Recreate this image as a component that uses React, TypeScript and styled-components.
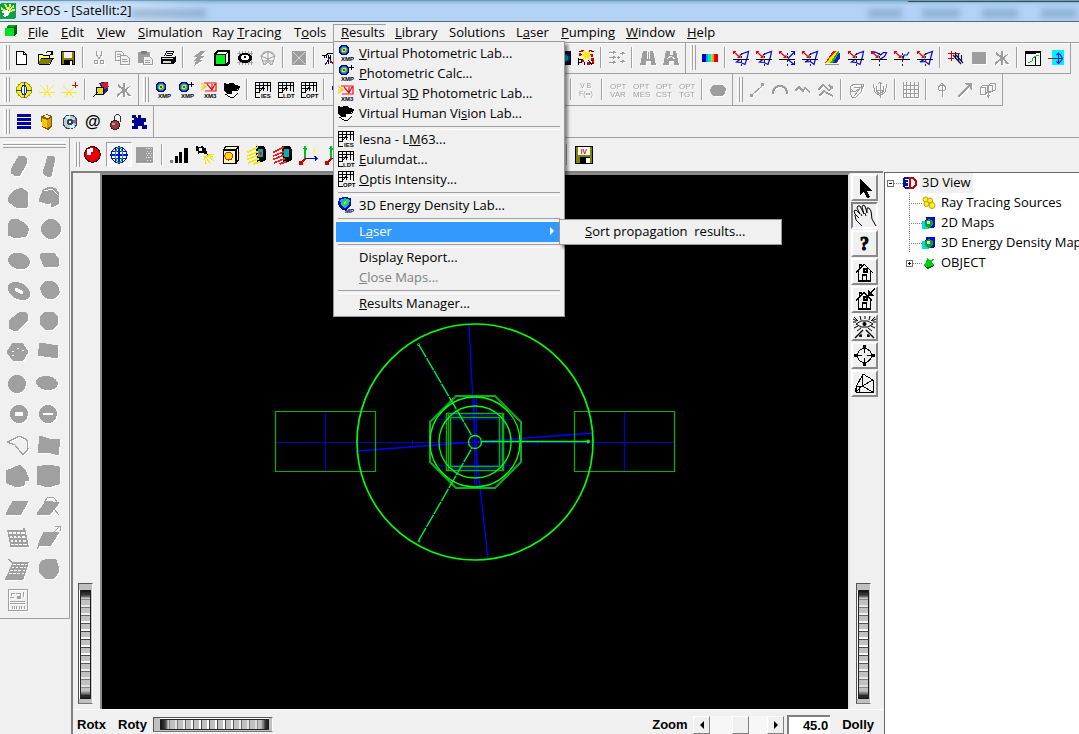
import React, { ReactNode } from "react";
import styled, { createGlobalStyle, css } from "styled-components";

const UI = '"Open Sans", "Noto Sans", sans-serif';

const GlobalStyle = createGlobalStyle`
  * { box-sizing: border-box; }
  body { margin: 0; background: #f0f0f0; color: #000; font: 13px/20px ${UI}; overflow: hidden; }
  button { font: inherit; color: inherit; border: 0; padding: 0; margin: 0; background: none; white-space: nowrap; }
  ul { list-style: none; margin: 0; padding: 0; }
  svg { display: block; flex: none; overflow: visible; }
`;

/* ---------- window chrome ---------- */

const Window = styled.div`
  height: 100vh;
  display: flex;
  flex-direction: column;
`;

const TitleBar = styled.header`
  height: 22px;
  flex: none;
  display: flex;
  align-items: center;
  gap: 5px;
  position: relative;
  overflow: hidden;
  border-top: 1px solid #6f9dbd;
  border-bottom: 1px solid #56697c;
  background: linear-gradient(90deg, rgba(255, 255, 255, 0.5), rgba(255, 255, 255, 0.35) 130px, transparent 210px),
    linear-gradient(#86b2d6, #b2d3f6 4px, #b2d3f6);
`;

const Title = styled.h1`
  margin: 0;
  font: 13px/18px ${UI};
  padding-bottom: 2px;
`;

const Reflection = styled.span<{ $left: number; $width: number }>`
  position: absolute;
  top: 8px;
  left: ${(p) => p.$left}px;
  width: ${(p) => p.$width}px;
  height: 9px;
  background: rgba(50, 85, 125, 0.28);
  filter: blur(3px);
`;

const BackWindow = styled.span`
  position: absolute;
  top: -3px;
  right: -4px;
  width: 176px;
  height: 4px;
  border-radius: 4px;
  background: #e6f1f6;
  border: 1px solid #40484c;
`;

const MenuBar = styled.nav`
  height: 20px;
  flex: none;
  display: flex;
  padding-left: 3px;
`;

const MenuLogo = styled.span`
  width: 17px;
  padding-top: 1px;
`;

const MenuSlot = styled.div<{ $width: number }>`
  position: relative;
  width: ${(p) => p.$width}px;
`;

const MenuTop = styled.button<{ $open?: boolean }>`
  width: 100%;
  height: 20px;
  text-align: left;
  padding: 0 0 4px 8px;
  line-height: 16px;
  ${(p) => p.$open && css`
    padding: 0 0 4px 7px;
    border-left: 1px solid #a0a0a0;
    border-right: 1px solid #fff;
    box-shadow: inset 0 1px #a0a0a0;
  `}
`;

const Popup = styled.ul<{ $left: string; $top: number; $width: number }>`
  position: absolute;
  z-index: 5;
  left: ${(p) => p.$left};
  top: ${(p) => p.$top}px;
  width: ${(p) => p.$width}px;
  padding: 2px;
  background: #f0f0f0;
  border: 1px solid #979797;
  box-shadow: 3px 3px 3px rgba(0, 0, 0, 0.45);
`;

const MenuItem = styled.li`
  position: relative;
`;

const MenuAction = styled.button<{ $selected?: boolean }>`
  display: flex;
  align-items: center;
  width: 100%;
  height: 20px;
  padding: 0 0 2px 2px;
  line-height: 18px;
  background: ${(p) => (p.$selected ? "#3399ff" : "transparent")};
  color: ${(p) => (p.$selected ? "#fff" : "#000")};
  white-space: pre;
  &:disabled { color: #808080; }
`;

const IconSlot = styled.span`
  width: 21px;
  flex: none;
`;

const SubArrow = styled.span`
  margin-left: auto;
  margin-right: 8px;
  border-left: 4px solid #fff;
  border-top: 4px solid transparent;
  border-bottom: 4px solid transparent;
`;

const MenuRule = styled.li`
  height: 6px;
  padding: 2px 2px 0;
  &::before { content: ""; display: block; height: 2px; border-top: 1px solid #a0a0a0; border-bottom: 1px solid #fff; }
`;

/* ---------- tool bars ---------- */

const ToolRows = styled.div`
  flex: none;
  overflow: hidden;
  box-shadow: inset 0 1px #a0a0a0, inset 0 2px #fff, inset 0 -1px #a0a0a0;
`;

const ToolRow = styled.div`
  display: flex;
  height: 32px;
`;

const Bar = styled.div<{ $big?: boolean }>`
  flex: none;
  display: flex;
  align-items: center;
  height: ${(p) => (p.$big ? 33 : 32)}px;
  padding: 0 3px 0 ${(p) => (p.$big ? 3 : 4)}px;
  border-right: ${(p) => (p.$big ? 0 : 1)}px solid #a0a0a0;
  border-bottom: ${(p) => (p.$big ? 0 : 1)}px solid #a0a0a0;
  --cell: ${(p) => (p.$big ? 26 : 23)}px;
`;

const Grip = styled.span<{ $tight?: boolean }>`
  width: 6px;
  height: 25px;
  margin-right: ${(p) => (p.$tight ? 0 : 2)}px;
  border-right: 1px solid #a0a0a0;
  background: linear-gradient(90deg, #fff 1px, #f0f0f0 1px 2px, #a0a0a0 2px 3px, #fff 3px 4px, #f0f0f0 4px);
`;

const Sep = styled.span`
  width: 2px;
  height: 21px;
  margin: 0 3px;
  border-left: 1px solid #a0a0a0;
  border-right: 1px solid #fff;
`;

const Gap = styled.span<{ $width: number }>`
  width: ${(p) => p.$width}px;
`;

const ToolButton = styled.button<{ $pressed?: boolean }>`
  width: var(--cell);
  height: 25px;
  display: flex;
  align-items: center;
  justify-content: center;
  &:disabled svg { filter: drop-shadow(1px 1px 0 #fff); }
  ${(p) => p.$pressed && css`
    background: #f8f8f8;
    border: 1px solid;
    border-color: #a0a0a0 #fff #fff #a0a0a0;
  `}
`;

/* ---------- body ---------- */

const Body = styled.div`
  flex: 1;
  min-height: 0;
  display: flex;
`;

const Palette = styled.aside`
  flex: none;
  align-self: flex-start;
  width: 70px;
  padding: 4px 3px 2px;
  border-right: 1px solid #a0a0a0;
  border-bottom: 1px solid #a0a0a0;
`;

const PaletteGrip = styled.div`
  height: 6px;
  margin-bottom: 3px;
  border-bottom: 1px solid #a0a0a0;
  background: linear-gradient(#fff 1px, #f0f0f0 1px 2px, #a0a0a0 2px 3px, #fff 3px 4px, #f0f0f0 4px);
`;

const PaletteGrid = styled.div`
  display: grid;
  grid-template-columns: 31px 31px;
  grid-auto-rows: 31px;
  color: #a0a0a0;
  svg { filter: drop-shadow(1px 1px 0 #fff); }
`;

const Work = styled.div`
  flex: 1;
  min-width: 0;
  display: flex;
  flex-direction: column;
  margin-left: 1px;
`;

const Panes = styled.div`
  flex: 1;
  min-height: 0;
  display: flex;
  gap: 1px;
`;

const Viewer = styled.main`
  flex: 1;
  min-width: 0;
  display: grid;
  grid-template-columns: 27px minmax(0, 1fr) 33px;
  grid-template-rows: minmax(0, 1fr) 25px;
  border-left: 2px solid #808080;
  border-top: 2px solid #808080;
`;

const WheelSide = styled.div`
  flex: 1;
  display: flex;
  flex-direction: column;
  justify-content: flex-end;
  align-items: flex-start;
  padding: 0 0 5px 5px;
`;

const Canvas = styled.div`
  min-height: 0;
  background: #000;
  border: solid #8c8c8c;
  border-width: 2px 2px 0 2px;
  border-right-color: #e3e3e3;
  svg { width: 100%; height: 100%; }
`;

const ViewTools = styled.div`
  display: flex;
  flex-direction: column;
  align-items: flex-start;
  gap: 1px;
  padding: 1px 0 0 1px;
  overflow: hidden;
`;

const ViewButton = styled.button<{ $pressed?: boolean }>`
  width: 27px;
  height: 27px;
  flex: none;
  display: flex;
  align-items: center;
  justify-content: center;
  border: 2px solid;
  border-color: ${(p) => (p.$pressed ? "#808080 #fff #fff #808080" : "#fff #8a8a8a #8a8a8a #fff")};
`;

const WheelInput = styled.input<{ $vertical?: boolean }>`
  appearance: none;
  display: block;
  margin: 0;
  border: 1px solid;
  border-color: #555 #fff #777 #555;
  outline: 0;
  ${(p) => p.$vertical
    ? css`
        writing-mode: vertical-lr;
        width: 15px;
        height: 121px;
        background:
          linear-gradient(90deg, #fff 1px, #222 1px 2px, transparent 2px 11px, #222 11px 12px, #c0c0c0 12px) 0 6px / 100% 109px no-repeat,
          linear-gradient(rgba(0,0,0,.9), rgba(0,0,0,.7) 5px, transparent 9px, transparent 101px, rgba(0,0,0,.7) 105px, rgba(0,0,0,.9)) 0 6px / 100% 109px no-repeat,
          linear-gradient(#c0c0c0, #c0c0c0) 0 0 / 100% 6px no-repeat,
          linear-gradient(#c0c0c0, #c0c0c0) 0 100% / 100% 4px no-repeat,
          linear-gradient(rgba(192,192,192,.8), transparent 45px, transparent 70px, rgba(192,192,192,.8)) 0 0 / 100% 100% no-repeat,
          repeating-linear-gradient(#c0c0c0 0 5px, #fff 5px 7px, #484848 7px 8px);
      `
    : css`
        width: 120px;
        height: 15px;
        background:
          linear-gradient(#fff 1px, #222 1px 2px, transparent 2px 11px, #222 11px 12px, #c0c0c0 12px) 6px 0 / 109px 100% no-repeat,
          linear-gradient(90deg, rgba(0,0,0,.9), rgba(0,0,0,.7) 5px, transparent 9px, transparent 101px, rgba(0,0,0,.7) 105px, rgba(0,0,0,.9)) 6px 0 / 109px 100% no-repeat,
          linear-gradient(#c0c0c0, #c0c0c0) 0 0 / 6px 100% no-repeat,
          linear-gradient(#c0c0c0, #c0c0c0) 100% 0 / 4px 100% no-repeat,
          linear-gradient(90deg, rgba(192,192,192,.8), transparent 45px, transparent 70px, rgba(192,192,192,.8)) 0 0 / 100% 100% no-repeat,
          repeating-linear-gradient(90deg, #c0c0c0 0 5px, #fff 5px 7px, #484848 7px 8px);
      `}
  &::-webkit-slider-thumb { appearance: none; width: 1px; height: 1px; background: transparent; }
`;

const Bottom = styled.div`
  grid-column: 1 / -1;
  display: flex;
  align-items: center;
  padding: 5px 9px 0 4px;
  border-top: 1px solid #fff;
  font: bold 13px/20px "Liberation Sans", sans-serif;
`;

const WheelLabel = styled.label<{ $width: number }>`
  width: ${(p) => p.$width}px;
`;

const ZoomGroup = styled.div`
  display: flex;
  align-items: center;
  margin-left: auto;
`;

const ArrowButton = styled.button<{ $right?: boolean }>`
  width: 17px;
  height: 18px;
  border: 1px solid;
  border-color: #fff #808080 #808080 #fff;
  display: flex;
  align-items: center;
  justify-content: center;
  &::before {
    content: "";
    border: 4px solid transparent;
    border-width: 4px ${(p) => (p.$right ? "0 4px 4px" : "4px 4px 0")};
    border-${(p) => (p.$right ? "left" : "right")}-color: #000;
  }
`;

const ZoomRange = styled.input`
  appearance: none;
  width: 57px;
  height: 18px;
  margin: 0;
  background: #f7f7f7;
  &::-webkit-slider-thumb {
    appearance: none;
    width: 17px;
    height: 18px;
    background: #f0f0f0;
    border: 1px solid;
    border-color: #fff #808080 #808080 #fff;
  }
`;

const ZoomValue = styled.input`
  width: 43px;
  height: 20px;
  margin: 0 12px 0 3px;
  padding: 0 2px 0 0;
  border: solid;
  border-width: 2px 0 0 2px;
  border-color: #808080;
  background: #fff;
  text-align: right;
  font: inherit;
`;

const TreePane = styled.section`
  flex: none;
  width: 195px;
  margin-top: 1px;
  padding-left: 2px;
  overflow: hidden;
  background: #fff;
  border-left: 1px solid #696969;
  border-top: 1px solid #696969;
`;

const TreeRow = styled.li<{ $depth: number }>`
  display: flex;
  align-items: center;
  height: 20px;
  padding-left: ${(p) => p.$depth * 19}px;
  white-space: nowrap;
`;

const Expander = styled.button<{ $plus?: boolean }>`
  width: 7px;
  height: 7px;
  flex: none;
  border: 1px solid #707070;
  background:
    linear-gradient(#000, #000) center / 3px 1px no-repeat,
    linear-gradient(#000, #000) center / ${(p) => (p.$plus ? "1px 3px" : "0 0")} no-repeat,
    #fff;
`;

const Branch = styled.span<{ $joint?: boolean }>`
  width: ${(p) => (p.$joint ? 13 : 9)}px;
  height: 20px;
  flex: none;
  margin-left: ${(p) => (p.$joint ? 3 : 0)}px;
  background:
    repeating-linear-gradient(90deg, #808080 0 1px, transparent 1px 2px) 0 10px / 100% 1px no-repeat,
    repeating-linear-gradient(#808080 0 1px, transparent 1px 2px) 0 0 / ${(p) => (p.$joint ? "1px 100%" : "0 0")} no-repeat;
`;

const TreeText = styled.span<{ $active?: boolean }>`
  margin-left: 3px;
  padding: 0 2px 2px;
  line-height: 18px;
  background: ${(p) => (p.$active ? "#f0f0f0" : "transparent")};
`;

/* ---------- icons ---------- */

const Svg = ({ s = 16, scale = 1, children }: { s?: number; scale?: number; children: ReactNode }) => (
  <svg width={s * scale} height={s * scale} viewBox={`0 0 ${s} ${s}`} shapeRendering="crispEdges" aria-hidden="true">{children}</svg>
);
const L = ({ d, c = "#000", w = 1, f = "none" }: { d: string; c?: string; w?: number; f?: string }) => (
  <path d={d} stroke={c} strokeWidth={w} fill={f} />
);
const F = ({ d, c = "#000" }: { d: string; c?: string }) => <path d={d} fill={c} />;
const Tiny = ({ x, y, t, c = "#000", s = 6 }: { x: number; y: number; t: string; c?: string; s?: number }) => (
  <text x={x} y={y} fill={c} fontSize={s} fontWeight={s < 7 ? 700 : 400} fontFamily="Liberation Sans, sans-serif" shapeRendering="auto">{t}</text>
);
const G = "#9d9d9d";

const xmpTarget = (
  <>
    <circle cx="6" cy="5" r="5.500" fill="#0000a8" />
    <circle cx="6" cy="5" r="4" fill="#0060ff" />
    <circle cx="6" cy="5" r="3" fill="#00e040" />
    <circle cx="6" cy="5" r="2" fill="#ffe000" />
    <F d="M5 4h2v2H5z" c="#f00000" />
  </>
);
const chart = <L d="M.5 9.500V.5h15v9M0 3.500h16M0 6.500h10M4.500 1v10M8.500 1v8M.5 9v6.500H5M0 10.500h5M4 10.500L9.500 3.500M12.500 1v8" />;
const polar = (tail: string, extra?: ReactNode) => (
  <>
    <g shapeRendering="auto"><L d={tail} c="#0000e8" w={1.200} /></g>
    <L d="M0 9.500h16" />
    <L d="M8.500 3v2M8.500 6v2M8.500 9v3M8.500 14v2" c="#202020" />
    <g shapeRendering="auto"><L d="M.5 1.500l6.500 6M.5 4V1.500H3M7 5v2.500H4.500" c="#e80000" w={1.100} /></g>
    {extra}
  </>
);

const icons: Record<string, ReactNode> = {
  newDoc: <L d="M2.500 1.500h7l3 3v10h-10zM9.500 1.500v3h3" f="#fff" />,
  open: <><F d="M1 4h5l1 2h6v8H1z" c="#ffff70" /><F d="M4 8h12l-4 6H1z" c="#808000" /><L d="M1.500 14V4.500h4l1 1h6V8M4 8.500h12l-3 5.500H1.500M9 3l2-1.500h3l1 2M15.500 1v3h-3" /></>,
  save: <><F d="M1 1h14v14H1z" /><F d="M2 2h12v12H2z" c="#808000" /><F d="M4 2h8v6H4z" c="#f0f0f0" /><F d="M4 10h9v5H4z" /><F d="M10 11h2v4h-2z" c="#fff" /></>,
  saveIv: <><F d="M0 0h16v16H0z" /><F d="M1 1h14v14H1z" c="#808000" /><F d="M3 1h10v7H3z" c="#fff" /><F d="M4 10h9v6H4z" /><F d="M10 11h3v4h-3z" c="#fff" /><Tiny x={5} y={7} t="IV" c="#e00000" s={6} /></>,
  cut: <><L d="M5.500 1v4l3 4M10.500 1v4l-3 4" c={G} /><circle cx="5" cy="12" r="2" stroke={G} fill="none" /><circle cx="11" cy="12" r="2" stroke={G} fill="none" /></>,
  copy: <><L d="M1.500 1.500h6l2 2v7h-8zM3 4.500h4M3 6.500h4" c={G} /><L d="M6.500 5.500h6l3 3v6h-9zM8 9.500h5M8 11.500h6" c={G} f="#f0f0f0" /></>,
  paste: <><F d="M1 2h12v11H1z" c={G} /><F d="M4 1h6v3H4z" c="#808080" /><L d="M6.500 6.500h6l3 3v5h-9zM8 10.500h5M8 12.500h5" c={G} f="#f0f0f0" /></>,
  print: <><L d="M4.500 6.500l2-5h7l-2 5" f="#fff" /><F d="M1 7h13l2-2v6l-3 3H1z" /><F d="M2 8h11v1H2zM3 11h8v2H3z" c="#d8d8d8" /><L d="M7 3.500h5M6 5.500h5" /><F d="M8 11h3v1H8z" c="#e0e000" /></>,
  bolt: <F d="M10 1h4L9 6h5l-6 4h4l-9 6 2-5H2l4-4H2z" c={G} />,
  cube: <><F d="M0 3l3-3h13v13l-3 3H0z" /><F d="M2 5h9v9H2z" c="#00f020" /><F d="M4 2h9l-2 2H2z" c="#fff" /><F d="M12 5l2-3v9l-2 3z" c="#fff" /></>,
  eye: <><L d="M2.500 1v14M5.500 1v14M8.500 1v14M11.500 1v14M14.500 1v14M0 3.500h16M0 12.500h16" c="#a0a0a0" /><ellipse cx="8" cy="8" rx="7" ry="5" fill="#000" /><ellipse cx="8" cy="7.500" rx="4" ry="2.500" fill="#fff" /><circle cx="8" cy="7" r="1.500" /></>,
  mesh: <g shapeRendering="auto"><L d="M8 1L1 6l7 3 7-3zM1 6l3 9 4-6 4 6 3-9M1 6L4 2h8l3 4M8 1v8M2 11h12M5 15l3-3 3 3" c={G} /></g>,
  crossBox: <><F d="M1 1h14v14H1z" c={G} /><L d="M2 2l12 12M14 2L2 14" c="#d8d8d8" /></>,
  table: <><L d="M0 5.500h4l2-2h8v2h2M4 8v-2M8 5v7M6 5v9M11 5v9M2 5v3" w={1} /><L d="M8 7l-5 8" c="#0020c0" /><L d="M8 11l5 4" c="#c00000" w={2} /></>,
  disc3d: <><F d="M0 1h16v14H0z" /><circle cx="10" cy="8" r="5" fill="#0020c0" /><circle cx="10" cy="8" r="3" fill="#00c060" /></>,
  burst: <><L d="M.5 8v7M.5 9.500h3v3H.5M6.500 12v3M10 10l4 5M1 4.500h3M13 13.500h3M9 14.500h3M1 1.500h3M12 1.500h4" /><F d="M1 3h2v3H1zM12 4h3v3h-3zM13 8h3v3h-3zM9 12h3v3H9zM4 9h2v3H4zM3 0h3v2H3zM11 0h3v2h-3zM13 12l3-2v4z" c="#d00000" /><F d="M8 0l1 3 4-2-2 4 4 1-4 1 1 3-4-2-3 2 1-3-4-2 4-1-1-3 3 1z" c="#fff000" /></>,
  arrows: <L d="M0 2.500h6M4 1l2 1.500L4 4M0 7.500h6M4 6l2 1.500L4 9M0 12.500h6M4 11l2 1.500L4 14M8 7.500h3M9.500 6v3M11 3.500h4M13 2l2 1.500L13 5M11 11.500h4M13 10l2 1.500-2 1.500" c={G} />,
  road: <><F d="M3 1h4v8h3V1h3l3 14h-5v-4H6v4H0z" c={G} /><L d="M8.500 2v7" c={G} /></>,
  road2: <><F d="M3 1h4v4h3V1h3l3 14h-5v-4H6v4H0z" c={G} /><L d="M4 9l4-3 4 3" c="#f0f0f0" /></>,
  spectrum: <><F d="M0 4h4v8H0z" c="#0000c0" /><F d="M4 4h2v8H4z" c="#00a0ff" /><F d="M6 4h3v8H6z" c="#00e8d0" /><F d="M9 4h1v8H9z" c="#c0e000" /><F d="M10 4h2v8h-2z" c="#ffa000" /><F d="M12 4h4v8h-4z" c="#e00000" /></>,
  polA: polar("M7 5l4-2 4.500-1.500-1 5-2.500 8L8 12.500 3.500 12l4-3"),
  polB: polar("M7 5l4-2 4.500-1.500-1.500 5-2 8-3.500-3L3 12l5-3"),
  polC: polar("M9 8.500l6-6M9 9.500l6 5", <F d="M12 1h4v4h-1V2h-3zM15 11h1v4h-4v-1h3z" c="#0000e8" />),
  polD: polar("M1.500 4l2-2 3 1 3 2 3-2.500h3l-2 4-5 3"),
  polE: polar("M9 9l1-4h3l2-3"),
  rainbow: <><F d="M0 13L8 1h6v8l-2 4z" c="#f01010" /><F d="M1 13L7 5l4-4h2L6 13z" c="#ffe800" /><F d="M5 13L13 1h1v3L8 13z" c="#10b020" /><F d="M8 13l6-10 1 0v5l-4 5z" c="#1020d0" /><L d="M0 14.500h14" c="#909090" /></>,
  plane: <><L d="M0 3.500h12M0 8.500h6M3.500 1v10" c="#d00000" /><g shapeRendering="auto"><L d="M7.500 2v7M5 5l8 9M10.500 4v7M8 5l7 8M13.500 5v6" c="#101050" w={1.200} /></g></>,
  block: <F d="M1 2h14v12H1z" c={G} />,
  starX: <><L d="M8 1v14M8 7l6 7M8 8L1 14M2 3l6 5" c={G} w={2} /><L d="M14 4l-6 5" c={G} /></>,
  gauge: <><L d="M.5 1.500h15v14H.5zM0 3.500h11M10.500 6v9" f="#fff" /><F d="M0 1h16v2H0z" /><L d="M3 13l4-2 1-3 3-2 3-1" c="#00c020" /></>,
  cyan: <><F d="M4 0h12v15H4z" c="#00f0ff" /><L d="M0 8.500h8" c="#e00000" /><g shapeRendering="auto"><L d="M7 8.500h7M10.500 3v10M8.500 5l2-2 2 2 2 3.500-2 3-2 2-2-2" c="#0020d0" w={1.200} /></g></>,
  globeY: <><circle cx="8" cy="8" r="7.500" fill="#fff200" stroke="#a09800" /><ellipse cx="8" cy="8" rx="2.500" ry="5" stroke="#0020c0" fill="#fff" /><L d="M8.500 0v16M0 8.500h5M11 8.500h5" c="#2040c0" /></>,
  rays: <L d="M8 3v5M8 10L1 3M8 10l7-7M8 10H0M8 10h8M8 10l-4 5M8 10l4 5" c="#f4ec20" />,
  raysPlus: <><L d="M7 10L1 4M7 10l5-5M7 10H0M7 10h8M7 10l-4 5M7 10l4 5" c="#f4ec20" /><L d="M13.500 0v6M10 3.500h6" c="#e00000" /></>,
  tool: <><F d="M6 1l3-1h6v9l-4 3z" c="#1020a0" /><F d="M8 1l6-1 2 5-6 3z" c="#d02020" /><F d="M3 5h8v8H3z" c="#e8d820" /><L d="M3.500 5.500h7v7h-7zM0 15l5-5" /></>,
  xmp: <>{xmpTarget}<Tiny x={3} y={16} t="XMP" /></>,
  xmpPlus: <>{xmpTarget}<L d="M13.500 0v5M11 2.500h5" /><Tiny x={3} y={16} t="XMP" /></>,
  xm3: <><g shapeRendering="auto"><L d="M3 1h12v8H4M6 2l5 6M11 2v6M14 2l-3 6" c="#f01010" w={1.200} /><L d="M0 1l5 4-5 3M0 5h5" c="#ffc800" w={1.200} /></g><Tiny x={3} y={16} t="XM3" /></>,
  vision: <><F d="M0 1l3 1 3-1h3l2 2 5 1-1 5-2-3 1 4-4 2-5 1-3-2-2-3z" /><F d="M8 9h4l3 1-3 4-6 1-5-2 2-1 5 0z" c="#fff" /><L d="M1 12l5 3h4l4-4" /></>,
  ies: <>{chart}<Tiny x={6} y={16} t="IES" /></>,
  ldt: <>{chart}<Tiny x={5} y={16} t="LDT" /></>,
  opt: <>{chart}<Tiny x={5} y={16} t="OPT" /></>,
  energy: <><F d="M1 1l6-1 6 1v7l-5 6-5-2-3-5z" c="#0010a0" /><F d="M2 3l5-2 5 2-1 5-4 3-3-2z" c="#00b0ff" /><F d="M4 6l5-4 2 2-4 5H4z" c="#30e030" /><F d="M6 5l2-1v2L6 7z" c="#ffe000" /><Tiny x={7} y={16} t="MP" c="#000060" /></>,
  vb: <><Tiny x={1} y={6} t="V B" c={G} s={7} /><Tiny x={0} y={14} t="F(••)" c={G} s={7} /></>,
  hexBlob: <F d="M3 3h10l3 4-1 5-3 2H4l-3-2-1-4z" c={G} />,
  line: <><L d="M2 14L14 3" c={G} /><F d="M1 12h3v3H1zM12 1h3v3h-3z" c={G} /></>,
  arc: <L d="M1 12V9l2-3 3-2h4l3 2 2 3v3" c={G} w={2} />,
  wave: <L d="M0 9l4-4 4 4 2-3 5 4" c={G} w={1.500} />,
  wave2: <L d="M0 8l5-5 6 5 4-3M1 14l5-5 3 2 6 3M11 3l4 4" c={G} w={1.500} />,
  link: <L d="M1 5l4-3h10l-3 8-5 5H3l-2-4zM1 9l5 1 9-7M5 14L12 5H5M1 5l3 5M12 2v5" c={G} />,
  lens: <L d="M1 2l2 8 5 4 5-4 2-8M8 0v16M5 4L4 9l4 3 4-3-1-5M4 8h8M6 2l2-2 2 2" c={G} />,
  grid: <L d="M3.500 0v16M7.500 0v16M11.500 0v16M15 0v16M0 3.500h16M0 7.500h16M0 11.500h16M0 15h16M.5 0v16" c={G} />,
  pin: <L d="M8 1v14M5 8l-1-2 2-3h4l2 3-1 2zM6 3l2-2 2 2" c={G} />,
  arrow: <><L d="M1 15L13 3" c={G} w={2} /><F d="M7 1h8v8l-2-2V3H9z" c={G} /></>,
  boxes: <L d="M.5 5.500h5v7h-5zM.5 5.500l2-2h5v7l-2 2M8.500 3.500h4v6h-4zM8.500 3.500l2-2h5v6l-3 2M5 10.500h6M8.500 8v6M7 13l1.500 2 1.500-2" c={G} />,
  lines: <F d="M1 0h14v3H1zM1 4h14v3H1zM1 8h14v3H1zM1 12h14v3H1z" c="#0000a0" />,
  book: <><F d="M2 2l6-2 5 2v10l-4 4-6-3z" c="#7a5a00" /><F d="M4 2l4-1 4 2-4 1z" c="#fff0b0" /><F d="M3 4l5 2v8l-5-2z" c="#ffc800" /><F d="M8 6l4-2v8l-4 2z" c="#d89a00" /></>,
  disc: <><circle cx="8" cy="8" r="7" fill="#b8d0dc" stroke="#404040" /><F d="M8 8L3 3l5-2zM8 8l5 5-5 2z" c="#c8fbff" /><F d="M8 8l6-3v5z" c="#7070b0" /><circle cx="8" cy="8" r="3" fill="#404040" /><circle cx="8" cy="8" r="1.500" fill="#fff" /></>,
  at: <text x="0" y="13" fontSize="16" fontWeight="700" fontFamily="Liberation Sans, sans-serif">@</text>,
  lock: <><L d="M6.500 7V2.500l2-2h2l2 2V8" c="#303030" /><circle cx="7" cy="11" r="4.500" fill="#904040" stroke="#401010" /><F d="M4 9h3v2H4z" c="#d09090" /></>,
  puzzle: <F d="M1 1h4l1 3h1V1h3v3h5v4h-2v3h3v4h-5v-3H7v3H1v-3h2V9H1V6h2V4H1z" c="#000090" />,
  ball: <><circle cx="7.500" cy="7.500" r="7.500" fill="#400000" /><circle cx="7.500" cy="7.500" r="6.500" fill="#e80000" /><F d="M3 3h2V2h3v3H6v3H3z" c="#fff" /></>,
  globe: <><circle cx="8" cy="8" r="7" stroke="#0010d0" fill="#fff" /><L d="M1 5h14M0 8h16M1 11h14M8 0v16M5 1v14M11 1v14" c="#0010e0" /><ellipse cx="8" cy="8" rx="3" ry="7" stroke="#00b040" fill="none" /></>,
  shade: <><F d="M0 1h15v14H0z" c={G} /><path d="M9 2.500h5M10 4.500h4M9 6.500h5M10 8.500h4M9 10.500h5M10 12.500h4" stroke="#e0e0e0" strokeDasharray="1 1" /></>,
  bars: <><F d="M0 12h3v3H0z" c="#808080" /><F d="M4 9h3v6H4zM8 5h3v10H8zM12 2h4v13h-4z" /></>,
  lamp: <><F d="M0 0l3 1 3-1 2 2 1-1v3l2 4-6-2-3 1v-2L0 4z" /><F d="M3 2h2v2H3z" c="#fff" /><L d="M10 7l6 1M9 8l7 5M8 9l5 7M7 9l2 7M11 8l4 2" c="#f4e800" /></>,
  boxSun: <><L d="M4 5l11-4M12 8l4-2M12 11l4-1" c="#f4e800" /><L d="M1.500 3.500h11v12h-11zM1.500 3.500l2-3h11v12l-2 3M12.500 3.500l2-3" w={1.200} f="#fffbc8" /><circle cx="6" cy="9" r="3.500" fill="#ffe000" stroke="#f02020" /></>,
  camY: <><F d="M7 0h7l2 4v8l-3 2H8z" /><F d="M9 3h4v7H9z" c="#00b0b0" /><F d="M10 5h2v3h-2z" c="#f02020" /><L d="M-1 6l10-5M-1 9l10-4M-1 12l10-4M0 15l10-4M5 16l6-2" c="#f4e800" w={1.500} /></>,
  camR: <><F d="M7 0h7l2 4v8l-3 2H8z" /><F d="M9 3h4v7H9z" c="#00b0b0" /><L d="M-1 6l10-5M-1 9l10-4M-1 12l10-4M0 15l10-4M5 16l6-2" c="#f02020" w={1.500} /></>,
  axes: <><L d="M11 2l3 4M14 2l-3 4M12.500 1v6" c="#f8f080" /><L d="M4.500 0v11M3 3l1.500-2L6 3" c="#00c020" w={1.200} /><L d="M5 11h11M13 9l2 2-2 2" c="#0010b0" w={1.500} /><L d="M5 11l-5 5M0 13v3h3" c="#d00000" w={1.500} /></>,
};
["VAR", "MES", "CST", "TGT"].forEach((t) => {
  icons["opt" + t] = <><Tiny x={0} y={7} t="OPT" c={G} s={8} /><Tiny x={0} y={15} t={t} c={G} s={8} /></>;
});

const greyed = new Set("cut copy paste bolt mesh crossBox arrows road road2 block starX vb optVAR optMES optCST optTGT hexBlob line arc wave wave2 link lens grid pin arrow boxes shade".split(" "));

const Tools = ({ items, tight, big, pressed }: { items: string; tight?: boolean; big?: boolean; pressed?: string }) => (
  <Bar role="toolbar" $big={big}>
    <Grip $tight={tight} />
    {items.split(" ").map((n, i) => {
      if (n === "|") return <Sep key={i} />;
      if (n[0] === "~") return <Gap key={i} $width={Number(n.slice(1))} />;
      return (
        <ToolButton key={i} aria-label={n} disabled={greyed.has(n)} $pressed={n === pressed}>
          <Svg scale={big ? 1.125 : 1}>{icons[n]}</Svg>
        </ToolButton>
      );
    })}
  </Bar>
);

const P = ({ p }: { p: string }) => <polygon points={p} fill="currentColor" stroke="currentColor" strokeLinejoin="round" />;
const O = ({ d }: { d: string }) => <path d={d} fill="none" stroke="currentColor" />;
const E = ({ x, y, rx, ry = rx, r = 0 }: { x: number; y: number; rx: number; ry?: number; r?: number }) => (
  <ellipse cx={x} cy={y} rx={rx} ry={ry} transform={`rotate(${r} ${x} ${y})`} fill="currentColor" />
);

const shapes: [string, ReactNode][] = [
  ["Cylinder", <P p="16,5 20,5 24,8 23,13 17,24 13,25 8,22 9,17" />],
  ["Rod", <P p="14,5 18,5 21,7 17,25 13,25 9,22" />],
  ["Cone", <P p="5,16 11,9 18,6 24,10 24,25 13,25 6,20" />],
  ["Elbow", <><P p="5,19 9,8 15,5 22,7 25,12 24,22 18,25 17,20 14,22" /><path d="M10 9l8-2 6 6" stroke="#fff" fill="none" /></>],
  ["Pyramid", <P p="9,6 14,6 22,11 26,16 23,23 13,25 5,22 5,11" />],
  ["Sphere", <E x={17} y={16} rx={10} />],
  ["Ellipsoid", <E x={16} y={17} rx={11} ry={8} r={15} />],
  ["Box", <P p="8,9 20,9 25,16 24,22 10,22 6,12" />],
  ["Torus", <><E x={16} y={16} rx={12} ry={8} r={30} /><ellipse cx="16" cy="16" rx="5" ry="2" transform="rotate(30 16 16)" fill="#fff" /></>],
  ["Paraboloid", <E x={16} y={15} rx={10} ry={9} r={35} />],
  ["Tube", <P p="17,6 22,6 25,9 24,15 15,24 10,24 6,22 6,15" />],
  ["Ball", <P p="11,6 19,6 23,10 24,18 19,23 11,23 6,18 6,11" />],
  ["Hexagon", <><P p="4,15 10,6 19,6 25,15 20,23 10,23" /><path d="M9 14h2M14 11h2M19 13h2M9 18h2" stroke="#fff" /></>],
  ["Plate", <P p="6,6 24,9 23,21 4,18" />],
  ["Disc", <E x={14} y={16} rx={9} />],
  ["Ellipse", <E x={13} y={15} rx={11} ry={7} r={8} />],
  ["Ring", <><E x={16} y={15} rx={9} /><rect x="12" y="13" width="8" height="4" rx="1" fill="#fff" /></>],
  ["Slot", <><E x={14} y={15} rx={9} /><path d="M9 14h10v2H9z" fill="#fff" /></>],
  ["Face", <g strokeWidth="1.300"><O d="M4 12L17 6l7 4 1 9-5 6-8-10zM4 12l8 3" /></g>],
  ["Patch", <P p="6,6 15,9 26,10 24,25 14,22 4,22" />],
  ["Polygon", <P p="17,4 22,9 26,19 22,20 21,24 14,26 4,22 3,10" />],
  ["Shield", <P p="3,6 14,4 25,6 25,23 14,26 3,23" />],
  ["Plane", <P p="10,9 25,9 18,22 3,22" />],
  ["Revolve", <><P p="12,9 25,11 16,22 3,22" /><O d="M10 10l4-5 6 1 4 5M20 17l5 6M14 5l-2 2" /></>],
  ["Mesh", <g strokeWidth="1.300"><O d="M5 8h17l3 15H8zM5 12h18M6 16h18M7 20h18M9 8l3 15M13 8l3 15M17 8l3 15M21 5v4" /></g>],
  ["Extrude", <><P p="10,9 25,9 17,22 4,22" /><O d="M20 9l6-6M21 3h5v5M3 26l3-4" /></>],
  ["Array", <g strokeWidth="1.300"><O d="M10 9h15l-5 16H3zM5 5l5 4M9 12h15M7 15h16M6 18h16M4 21h17M14 9l-7 16M18 9l-7 16M22 9l-6 16M3 23h18" /></g>],
  ["Blob", <P p="8,7 14,5 22,6 24,12 24,19 20,24 11,24 6,19 5,12" />],
  ["Report", <g shapeRendering="crispEdges"><O d="M5.500 4.500h19v21h-19zM8.500 11V8.500h3M13 8.500h4v3M20.500 7v5M7 12.500h4M7 16.500h15M7 18.500h15M9.500 21v3M11.500 21v3M13.500 21v3M16.500 21v3M18.500 21v3M21.500 21v3" /><path d="M14 11h4v3h-4z" fill="currentColor" /></g>],
];

const viewTools: [string, ReactNode][] = [
  ["Select", <F d="M7 3v16l4-3 3 6 3-1-3-6h5z" />],
  ["Grab", <g shapeRendering="auto"><L d="M6 14L2 10l-1-3 2-1 4 4-3-6 1-2h2l4 8-2-7 1-2 2 1 2 7 0-5 2 0 2 3 1 8 4 7M2 11l1 5 6 6M8 10l1 2M12 9l1 3" /></g>],
  ["Help", <text x="7" y="18" fontSize="18" fontWeight="700" stroke="#000" fontFamily="Liberation Serif, serif">?</text>],
  ["Home", <L w={1.300} d="M3 13l8-9 9 9M5.500 11v10h12V11M6.500 8V5h2M9.500 21v-6h4v6M11 9h3v3h-3z" />],
  ["Set home", <><L w={1.300} d="M3 13l8-9 8 9M5.500 11v10h12V11M6.500 8V5h2M9.500 21v-6h4v6M11 9h3v3h-3z" /><F d="M15 8V2l2 2 4-4 1 1-4 4 3 3z" /></>],
  ["View all", <g shapeRendering="auto"><L d="M3 8l5-3h7l5 3-5 3H8zM1 1l4 4M7 0l1 4M12 0v3M17 0l-1 4M22 1l-4 4M0 6h3M20 6h3M1 12l4-2M18 10l4 2M4 15l4-3M19 15l-4-3M0 3l4 2M23 3l-4 2" /><circle cx="11.500" cy="8" r="2" fill="#000" /><L d="M2 22l8-8M21 22l-8-8M8 21v-3M15 21v-3M6 20h3M14 20h3" w={1.400} /></g>],
  ["Seek", <><circle cx="11.500" cy="11.500" r="7" stroke="#000" fill="none" /><L d="M11.500 1v8M11.500 14v8M1 11.500h8M14 11.500h8" /><F d="M10 1h3v4h-3zM10 18h3v4h-3zM1 10h4v3H1zM18 10h4v3h-4z" /></>],
  ["Perspective", <L d="M3 15L10 2l10 6v12L3 20zM3 15l6-1 11 6M10 2l-1 12L3 20M9 14l11-6M3 20l-1-4M6 20v-5" />],
];

/* ---------- menus ---------- */

const Mnemonic = ({ text }: { text: string }) => {
  const i = text.indexOf("&");
  if (i < 0) return <>{text}</>;
  return <span>{text.slice(0, i)}<u>{text[i + 1]}</u>{text.slice(i + 2)}</span>;
};

const topMenus: [string, number][] = [
  ["&File", 33], ["&Edit", 36], ["&View", 41], ["&Simulation", 74], ["Ray &Tracing", 82], ["T&ools", 47],
  ["&Results", 54], ["&Library", 54], ["Solutions", 67], ["L&aser", 45], ["&Pumping", 65], ["&Window", 61], ["&Help", 44],
];

const results: [string, string?][] = [
  ["&Virtual Photometric Lab...", "xmp"], ["&Photometric Calc...", "xmpPlus"],
  ["Virtual 3&D Photometric Lab...", "xm3"], ["Virtual Human Vi&sion Lab...", "vision"], ["-"],
  ["Iesna - L&M63...", "ies"], ["&Eulumdat...", "ldt"], ["&Optis Intensity...", "opt"], ["-"],
  ["3D Energy Density Lab...", "energy"], ["-"], ["L&aser"], ["-"],
  ["Displa&y Report..."], ["&Close Maps..."], ["-"], ["&Results Manager..."],
];

const ResultsMenu = () => (
  <Popup $left="0px" $top={19} $width={232}>
    {results.map(([label, icon], i) => {
      if (label === "-") return <MenuRule key={i} />;
      const sub = label === "L&aser";
      return (
        <MenuItem key={i}>
          <MenuAction $selected={sub} disabled={label === "&Close Maps..."}>
            <IconSlot>{icon && <Svg>{icons[icon]}</Svg>}</IconSlot>
            <Mnemonic text={label} />
            {sub && <SubArrow />}
          </MenuAction>
          {sub && (
            <Popup $left="calc(100% - 3px)" $top={-3} $width={223}>
              <MenuItem>
                <MenuAction><IconSlot /><Mnemonic text="&Sort propagation  results..." /></MenuAction>
              </MenuItem>
            </Popup>
          )}
        </MenuItem>
      );
    })}
  </Popup>
);

/* ---------- satellite wireframe ---------- */

const Satellite = () => (
  <svg viewBox="102 175 746 534" role="img" aria-label="Satellite wireframe" fill="none">
    <g stroke="#0000c8" strokeWidth="1.200">
      <path d="M275 442.500h400M325.500 412v60M624.500 412v60M435 419.500h78M435 465.500h78M412.500 440v5M537.500 440v5" />
      <path d="M448.500 415.500h53v53h-53zM474.500 396v92M476.500 396v92" />
    </g>
    <g stroke="#0000ff">
      <path d="M469 325l6 117 13 117M357 451l118-9 118-9" strokeWidth="1.300" />
      <path d="M418 345l55 96M418 540l55-96" strokeDasharray="6 3" />
    </g>
    <g stroke="#00b400" strokeWidth="1.200">
      <path d="M275.500 411.500h100v60h-100zM574.500 411.500h100v60h-100z" />
      <path d="M446.500 413.500h57v57h-57zM450.500 417.500h49v49h-49z" strokeWidth="1.500" />
      <path d="M448.500 414v56M502.500 414v56" />
    </g>
    <path d="M456 396h39l26 26v40l-26 26h-39l-26-26v-40z" stroke="#00b020" strokeWidth="2" />
    <g stroke="#00ff00">
      <circle cx="475" cy="442" r="118" strokeWidth="1.700" />
      <circle cx="475" cy="442" r="45" strokeWidth="1.300" />
      <circle cx="475" cy="442" r="36" strokeWidth="1.300" />
      <circle cx="475" cy="442" r="6.500" strokeWidth="1.300" />
      <path d="M419 345l53 91M419 540l53-92" strokeDasharray="14 1" strokeWidth="1.300" />
      <path d="M482 441.500h104" strokeWidth="1.500" />
      <circle cx="588" cy="441.500" r="1.500" fill="#0f0" />
      <circle cx="418.500" cy="344.500" r="1" />
      <circle cx="419" cy="541" r="1" />
    </g>
  </svg>
);

const MapIcon = () => (
  <Svg s={14}><F d="M4 1h9v9l-2 2H2z" c="#0010d0" /><F d="M0 5h7v8H0z" c="#00d8e8" /><F d="M3 5l4-2 4 2 0 4-4 3-4-2z" c="#10a020" /><F d="M5 5h3v3H5z" c="#e8ffd0" /></Svg>
);

export default function App() {
  return (
    <Window>
      <GlobalStyle />
      <TitleBar>
        <Reflection $left={130} $width={76} />
        <Reflection $left={868} $width={34} />
        <Reflection $left={922} $width={38} />
        <Reflection $left={982} $width={36} />
        <Reflection $left={1041} $width={36} />
        <BackWindow />
        <Svg><rect width="16" height="16" rx="2" fill="#0ea04a" /><L d="M1 5l4 3M5 1l3 6M10 1l-1 6M14 3l-5 4M15 7l-6 1" c="#e8f060" w={2} /><F d="M1 9l5-2 4 1-1 4-4 2-3-2 3-1z" c="#fff" /></Svg>
        <Title>SPEOS - [Satellit:2]</Title>
      </TitleBar>
      <MenuBar>
        <MenuLogo><Svg><F d="M2 6l4-4h8v8l-3 3H2z" c="#005c10" /><F d="M2 5h9v8H2z" c="#00e020" /><F d="M3 4l3-2h8l-3 2z" c="#00a018" /></Svg></MenuLogo>
        {topMenus.map(([label, width]) => {
          const open = label === "&Results";
          return (
            <MenuSlot key={label} $width={width}>
              <MenuTop $open={open}><Mnemonic text={label} /></MenuTop>
              {open && <ResultsMenu />}
            </MenuSlot>
          );
        })}
      </MenuBar>
      <ToolRows>
        <ToolRow>
          <Tools tight items="newDoc open save | cut copy paste print | bolt cube eye mesh | crossBox | table ~210 disc3d burst | arrows | road road2" />
          <Tools items="spectrum | polA polA polC polB rainbow polA polD polE polB | plane block starX | gauge cyan" />
        </ToolRow>
        <ToolRow>
          <Tools items="globeY rays raysPlus | tool starX" />
          <Tools items="xmp xmpPlus xm3 vision | ies ldt opt | energy ~216 | vb | optVAR optMES optCST optTGT | hexBlob" />
          <Tools items="line arc wave wave2 | link lens | grid | pin arrow boxes" />
        </ToolRow>
        <ToolRow>
          <Tools items="lines book disc at lock puzzle" />
        </ToolRow>
      </ToolRows>
      <Body>
        <Palette>
          <PaletteGrip />
          <PaletteGrid>
            {shapes.map(([name, art]) => (
              <button key={name} aria-label={name} disabled><Svg s={31}>{art}</Svg></button>
            ))}
          </PaletteGrid>
        </Palette>
        <Work>
          <Tools big tight pressed="globe" items="ball globe shade | bars lamp boxSun camY camR axes axes ~215 | saveIv" />
          <Panes>
            <Viewer>
              <WheelSide><WheelInput $vertical type="range" id="rotx" /></WheelSide>
              <Canvas><Satellite /></Canvas>
              <ViewTools>
                {viewTools.map(([name, art]) => (
                  <ViewButton key={name} aria-label={name} $pressed={name === "Grab"}><Svg s={23}>{art}</Svg></ViewButton>
                ))}
                <WheelSide><WheelInput $vertical type="range" id="dolly" /></WheelSide>
              </ViewTools>
              <Bottom>
                <WheelLabel $width={41} htmlFor="rotx">Rotx</WheelLabel>
                <WheelLabel $width={35} htmlFor="roty">Roty</WheelLabel>
                <WheelInput type="range" id="roty" />
                <ZoomGroup>
                  <WheelLabel $width={41} htmlFor="zoom">Zoom</WheelLabel>
                  <ArrowButton aria-label="Zoom out" />
                  <ZoomRange type="range" id="zoom" defaultValue={55} />
                  <ArrowButton $right aria-label="Zoom in" />
                  <ZoomValue aria-label="Zoom value" defaultValue="45.0" />
                  <label htmlFor="dolly">Dolly</label>
                </ZoomGroup>
              </Bottom>
            </Viewer>
            <TreePane>
              <ul role="tree">
                <TreeRow $depth={0}>
                  <Expander aria-label="Collapse" /><Branch />
                  <Svg s={14}><F d="M0 2l2-1h5v12H2l-2-2z" c="#0010a0" /><path d="M7 2h3l3 3v4l-3 3H7z" stroke="#d00000" strokeWidth="2" fill="#fff" /><L d="M2 3.500h3v3H3M5.500 6v4H2" c="#fff" /></Svg>
                  <TreeText $active>3D View</TreeText>
                </TreeRow>
                <TreeRow $depth={1}>
                  <Branch $joint />
                  <Svg s={14}><g shapeRendering="auto" stroke="#c0a000" fill="#ffec30"><circle cx="3.500" cy="3.500" r="2.500" /><circle cx="8" cy="4.500" r="2.500" /><circle cx="4.500" cy="8" r="2.500" /><circle cx="10" cy="9.500" r="3" /></g></Svg>
                  <TreeText>Ray Tracing Sources</TreeText>
                </TreeRow>
                <TreeRow $depth={1}><Branch $joint /><MapIcon /><TreeText>2D Maps</TreeText></TreeRow>
                <TreeRow $depth={1}><Branch $joint /><MapIcon /><TreeText>3D Energy Density Maps</TreeText></TreeRow>
                <TreeRow $depth={1}>
                  <Expander $plus aria-label="Expand" /><Branch />
                  <Svg s={14}><F d="M5 2l3 2 4-1-2 3 2 3-4 2-2 2-3-3-2-1 3-3z" c="#00d010" /><F d="M6 11l6-2 0 1-6 3-4-3z" c="#006a08" /></Svg>
                  <TreeText>OBJECT</TreeText>
                </TreeRow>
              </ul>
            </TreePane>
          </Panes>
        </Work>
      </Body>
    </Window>
  );
}
